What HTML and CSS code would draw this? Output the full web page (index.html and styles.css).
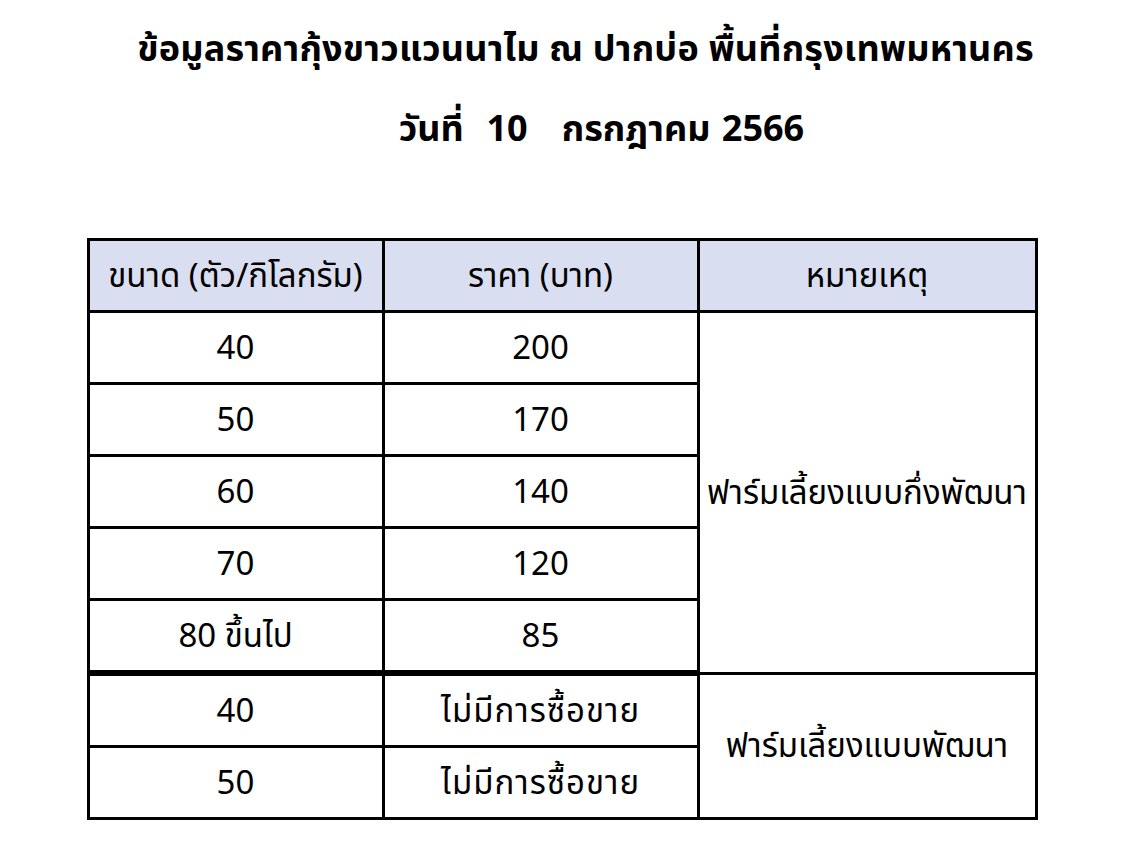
FILE: index.html
```html
<!DOCTYPE html>
<html lang="th">
<head>
<meta charset="utf-8">
<link rel="stylesheet" href="styles.css">
</head>
<body>
<div class="page">
  <h1 class="title">ข้อมูลราคากุ้งขาวแวนนาไม ณ ปากบ่อ พื้นที่กรุงเทพมหานคร</h1>
  <h2 class="date">วันที่&nbsp;&nbsp;10&nbsp;&nbsp;&nbsp;กรกฎาคม 2566</h2>
  <table class="price">
    <colgroup><col class="c1"><col class="c2"><col class="c3"></colgroup>
    <thead>
      <tr><th>ขนาด (ตัว/กิโลกรัม)</th><th>ราคา (บาท)</th><th>หมายเหตุ</th></tr>
    </thead>
    <tbody>
      <tr><td>40</td><td>200</td><td rowspan="5">ฟาร์มเลี้ยงแบบกึ่งพัฒนา</td></tr>
      <tr><td>50</td><td>170</td></tr>
      <tr><td>60</td><td>140</td></tr>
      <tr><td>70</td><td>120</td></tr>
      <tr><td>80 ขึ้นไป</td><td>85</td></tr>
      <tr class="sep"><td>40</td><td class="wide">ไม่มีการซื้อขาย</td><td rowspan="2">ฟาร์มเลี้ยงแบบพัฒนา</td></tr>
      <tr><td>50</td><td class="wide">ไม่มีการซื้อขาย</td></tr>
    </tbody>
  </table>
</div>
</body>
</html>
```
FILE: styles.css
```css
html, body {
  margin: 0;
  padding: 0;
  background: #ffffff;
}
body {
  font-family: "Noto Sans Thai", "Noto Sans", "Noto Sans Thai UI", sans-serif;
  color: #000;
}
.page {
  padding-top: 22px;
  display: flex;
  flex-direction: column;
  align-items: center;
}
.title {
  margin: 0 0 0 46px;
  font-size: 36px;
  font-weight: 700;
  line-height: 56px;
  letter-spacing: 0.2px;
}
.date {
  margin: 24px 0 0 78px;
  font-size: 36px;
  font-weight: 700;
  line-height: 56px;
  word-spacing: 2px;
}
.price {
  margin-top: 80px;
  margin-left: -1px;
  border-collapse: collapse;
  table-layout: fixed;
  width: 948px;
}
.c1 { width: 295px; }
.c2 { width: 315px; }
.c3 { width: 338px; }
.price th, .price td {
  border: 3px solid #000;
  height: 66px;
  padding: 3px 0 0 0;
  text-align: center;
  vertical-align: middle;
  font-size: 33px;
  font-weight: 400;
}
.price th {
  background: #d9def0;
  font-weight: 400;
}
.price td.wide {
  letter-spacing: 1px;
}
.price tr.sep td {
  border-top-width: 6px;
}
.price tr.sep td:last-child {
  border-top-width: 3px;
}
```
